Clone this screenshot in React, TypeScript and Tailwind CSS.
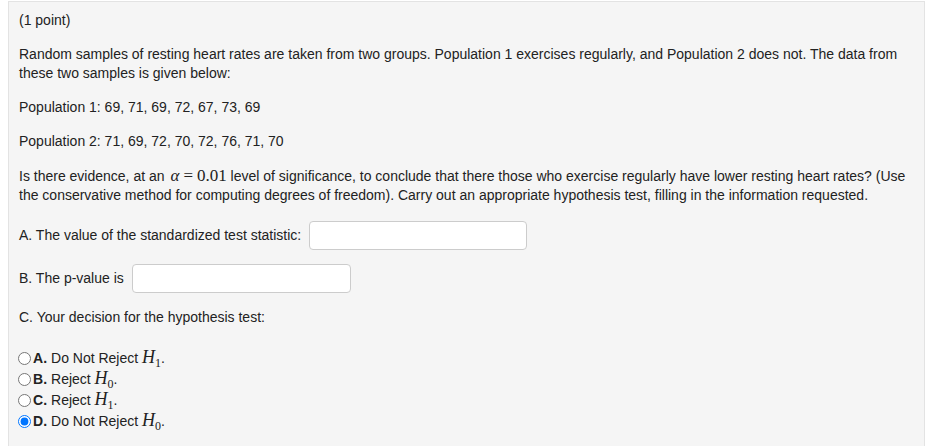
import { useState } from "react";

const OPTIONS = [
  { key: "A", label: "Do Not Reject", h: "1" },
  { key: "B", label: "Reject", h: "0" },
  { key: "C", label: "Reject", h: "1" },
  { key: "D", label: "Do Not Reject", h: "0" },
];

function H({ sub }: { sub: string }) {
  return (
    <span className="font-['Liberation_Serif',serif] text-[18px] leading-[19px]">
      <i>H</i>
      <span className="relative top-[4px] text-[12px]">{sub}</span>
    </span>
  );
}

export default function App() {
  const [choice, setChoice] = useState("D");

  return (
    <div className="min-h-[446px] bg-white pl-[8px] pt-[1px] font-['Liberation_Sans',Arial,sans-serif] text-[14px] leading-[19px] text-[#222]">
      <div className="h-[460px] w-[917px] border border-[#e3e3e3] bg-[#f5f5f5] px-[10px] pt-[9px]">
        <p>(1 point)</p>

        <p className="mt-[15px]">
          Random samples of resting heart rates are taken from two groups. Population 1 exercises regularly, and
          Population 2 does not. The data from these two samples is given below:
        </p>

        <p className="mt-[15px]">Population 1: 69, 71, 69, 72, 67, 73, 69</p>

        <p className="mt-[15px]">Population 2: 71, 69, 72, 70, 72, 76, 71, 70</p>

        <p className="mt-[15px]">
          Is there evidence, at an{" "}
          <span className="ml-[2px] font-['Liberation_Serif',serif] text-[17px] leading-[19px]">
            <i>α</i>
            <span className="mx-[4px]">=</span>0.01
          </span>{" "}
          level of significance, to conclude that there those who exercise regularly have lower resting heart rates?
          (Use the conservative method for computing degrees of freedom). Carry out an appropriate hypothesis test,
          filling in the information requested.
        </p>

        <div className="mt-[16px] flex items-center gap-[8px]">
          <span>A. The value of the standardized test statistic:</span>
          <input
            type="text"
            className="h-[29px] w-[218px] rounded-[4px] border border-[#cccccc] bg-white px-2 outline-none"
          />
        </div>

        <div className="mt-[14px] flex items-center gap-[8px]">
          <span>B. The p-value is</span>
          <input
            type="text"
            className="h-[29px] w-[219px] rounded-[4px] border border-[#cccccc] bg-white px-2 outline-none"
          />
        </div>

        <p className="mt-[15px]">C. Your decision for the hypothesis test:</p>

        <div className="mt-[21px] -ml-[1px] flex flex-col">
          {OPTIONS.map((o) => (
            <label key={o.key} className="flex h-[21px] items-center">
              <input
                type="radio"
                name="decision"
                checked={choice === o.key}
                onChange={() => setChoice(o.key)}
                className="m-0 mr-[2px] h-[13px] w-[13px]"
              />
              <b className="mr-[4px]">{o.key}.</b>
              <span>
                {o.label} <H sub={o.h} />.
              </span>
            </label>
          ))}
        </div>
      </div>
    </div>
  );
}
